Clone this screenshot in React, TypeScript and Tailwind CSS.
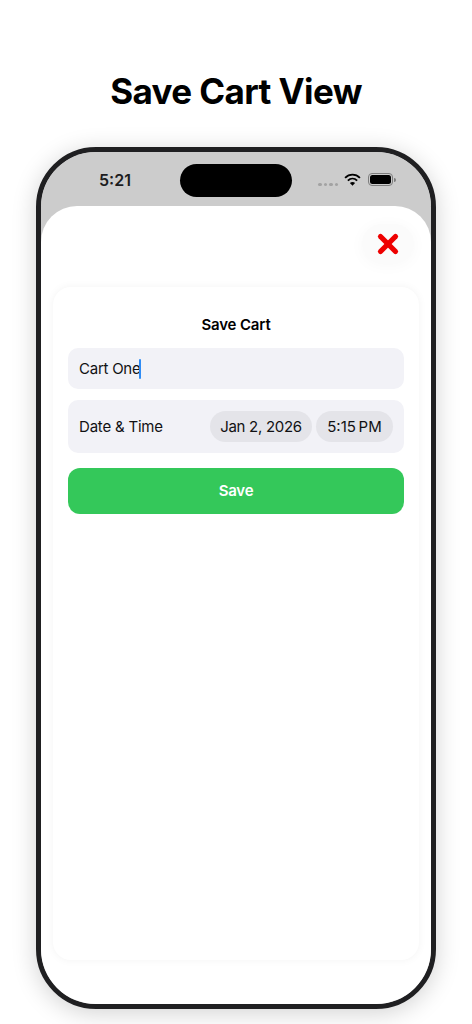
import { X } from "lucide-react";

function StatusBar() {
  return (
    <div className="flex h-[54px] shrink-0 items-center bg-[#cccccc] pt-[2px]">
      <span className="ml-[58px] w-[32px] text-[16px] font-semibold text-[#1c1c1e]">5:21</span>
      <div className="ml-[49px] h-[33px] w-[112px] rounded-full bg-black" />
      <div className="ml-[26px] flex items-center gap-[2px] pt-[9px]">
        <span className="h-[3.5px] w-[3.5px] rounded-full bg-[#a3a3a3]" />
        <span className="h-[3.5px] w-[3.5px] rounded-full bg-[#a3a3a3]" />
        <span className="h-[3.5px] w-[3.5px] rounded-full bg-[#a3a3a3]" />
        <span className="h-[3.5px] w-[3.5px] rounded-full bg-[#a3a3a3]" />
      </div>
      <svg viewBox="0 0 18 14" className="mb-[1px] ml-[6px] h-[13px] w-[17px]" fill="none" stroke="#000" strokeWidth="2">
        <path d="M1 5.2C5.6 .6 12.4 .6 17 5.2" />
        <path d="M4 8.2C6.9 5.4 11.1 5.4 14 8.2" />
        <path d="M9 13.6 L6.2 10.8C7.8 9.4 10.2 9.4 11.8 10.8Z" fill="#000" stroke="none" />
      </svg>
      <div className="mb-[1px] ml-[7px] flex items-center">
        <div className="flex h-[13px] w-[25px] items-center justify-center rounded-[4px] border border-[#7d7d7d]">
          <div className="h-[9px] w-[21px] rounded-[2.5px] bg-black" />
        </div>
        <div className="ml-px h-[4px] w-[1.5px] rounded-r bg-[#7d7d7d]" />
      </div>
    </div>
  );
}

export default function App() {
  return (
    <div className="flex h-[1024px] w-[472px] flex-col items-center overflow-hidden bg-white font-['Inter',sans-serif] text-[#111113]">
      <h1 className="mt-[68px] h-[46px] text-[35px] leading-[46px] font-bold tracking-[-0.6px] text-black">
        Save Cart View
      </h1>

      <div className="mt-[33px] flex h-[862px] w-[400px] flex-col overflow-hidden rounded-[60px] border-[5px] border-[#1f1f21] bg-[#cccccc] shadow-[0_4px_24px_rgba(0,0,0,0.18)]">
        <StatusBar />

        <div className="flex flex-1 flex-col rounded-t-[36px] bg-white px-3 pb-[44px]">
          <div className="mt-[18px] flex justify-end pr-[5px]">
            <button className="flex h-[39px] w-[52px] items-center justify-center rounded-full bg-[#fbfbfb] shadow-[0_2px_16px_rgba(0,0,0,0.03)]">
              <X className="h-[30px] w-[30px] text-[#ee0000]" strokeWidth={4.2} absoluteStrokeWidth />
            </button>
          </div>

          <div className="mt-[24px] flex flex-1 flex-col rounded-[18px] bg-white px-[15px] pt-[29px] shadow-[0_0_8px_rgba(0,0,0,0.05)]">
            <h2 className="text-center text-[15px] leading-[18px] font-semibold tracking-[-0.15px] text-black">Save Cart</h2>

            <div className="mt-[14px] flex h-[41px] items-center rounded-[10px] bg-[#f2f2f7] px-[11px] text-[15px] tracking-[-0.25px]">
              <span className="pt-[2px]">Cart One</span>
              <span className="-ml-[1px] h-[20px] w-[2px] rounded-sm bg-[#2f8cf5]" />
            </div>

            <div className="mt-[11px] flex h-[53px] items-center justify-between rounded-[10px] bg-[#f2f2f7] px-[11px] text-[15px] tracking-[-0.2px]">
              <span className="pt-[2px]">Date &amp; Time</span>
              <div className="flex gap-[4px]">
                <span className="flex h-[31px] w-[102px] items-center justify-center rounded-full bg-[#e4e4e9] pt-[2px] tracking-[-0.3px]">Jan 2, 2026</span>
                <span className="flex h-[31px] w-[77px] items-center justify-center rounded-full bg-[#e4e4e9] pt-[2px] tracking-normal [word-spacing:-1.5px]">5:15 PM</span>
              </div>
            </div>

            <button className="mt-[15px] h-[46px] rounded-[12px] bg-[#34c85a] pt-px text-[15px] font-semibold tracking-[-0.2px] text-white">
              Save
            </button>
          </div>
        </div>
      </div>
    </div>
  );
}
